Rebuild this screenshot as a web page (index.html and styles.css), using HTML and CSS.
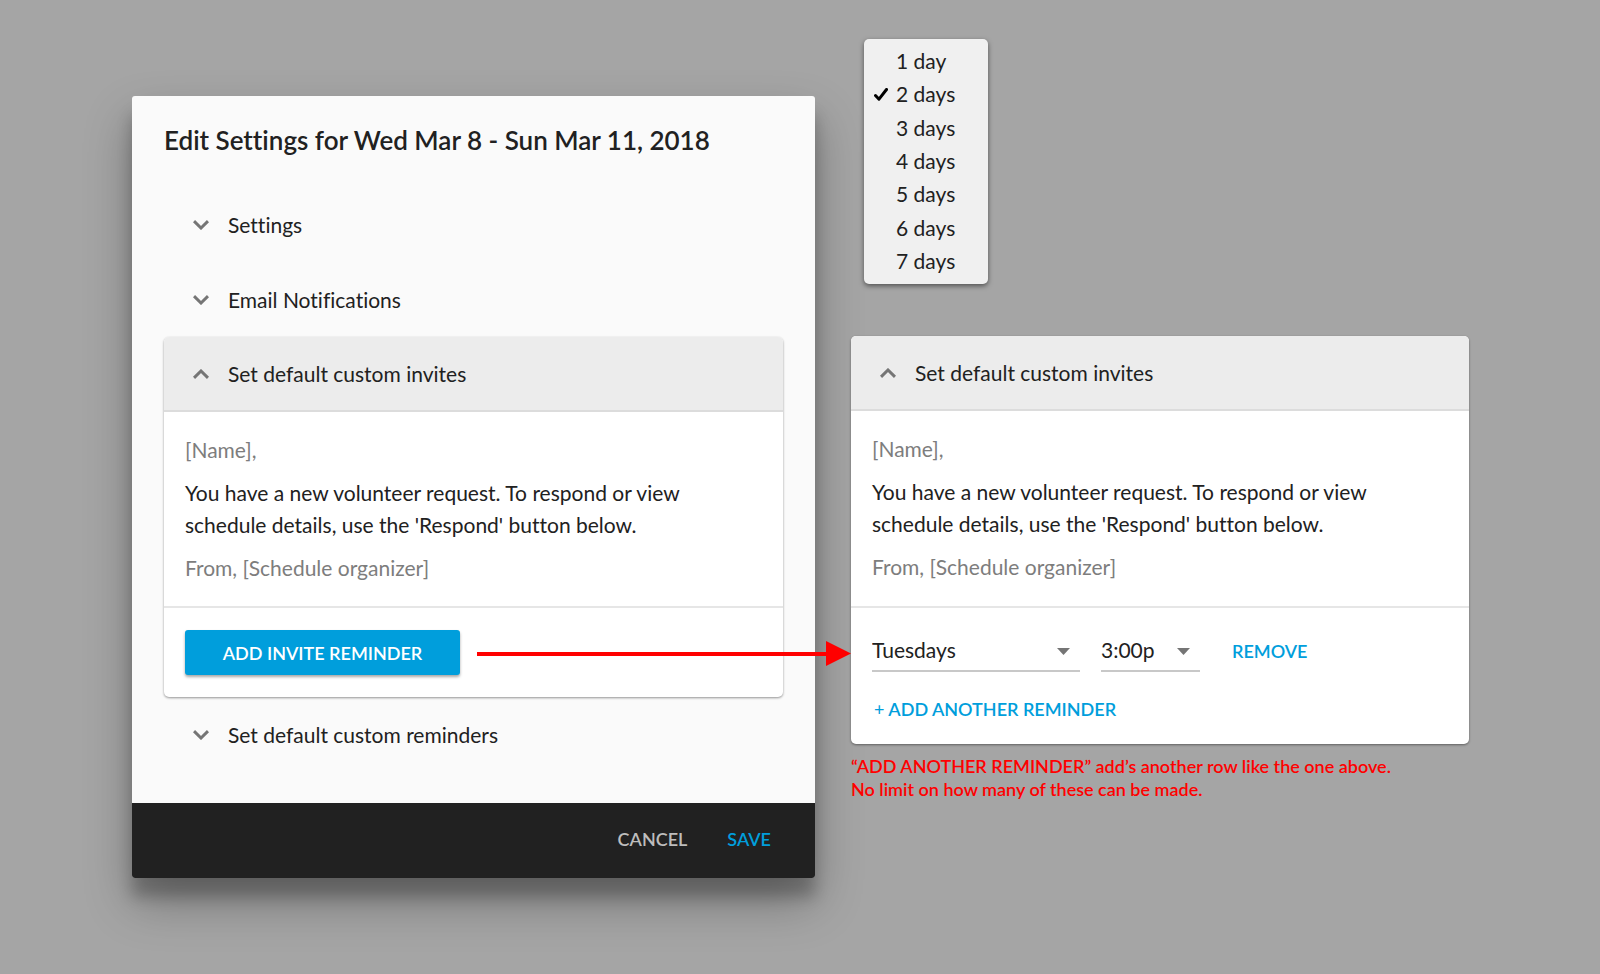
FILE: index.html
```html
<!DOCTYPE html>
<html lang="en">
<head>
<meta charset="utf-8">
<meta name="viewport" content="width=device-width, initial-scale=1">
<title>Edit Settings</title>
<link rel="stylesheet" href="styles.css">
</head>
<body>
<svg class="sprite" aria-hidden="true">
  <symbol id="chevron-down" viewBox="0 0 16 10"><path d="M1 1.200 8 8l7-6.800" fill="none" stroke="#757575" stroke-width="3"/></symbol>
  <symbol id="chevron-up" viewBox="0 0 16 10"><path d="M1 8.800 8 2l7 6.800" fill="none" stroke="#757575" stroke-width="3"/></symbol>
</svg>
<main class="board">
  <section class="modal" role="dialog" aria-labelledby="modal-title">
    <div class="modal-body">
      <h1 class="modal-title" id="modal-title">Edit Settings for Wed Mar 8 - Sun Mar 11, 2018</h1>
      <button class="section-toggle" type="button" aria-expanded="false"><svg class="chevron"><use href="#chevron-down"/></svg>Settings</button>
      <button class="section-toggle" type="button" aria-expanded="false"><svg class="chevron"><use href="#chevron-down"/></svg>Email Notifications</button>
      <article class="card">
        <button class="section-toggle card-header" type="button" aria-expanded="true"><svg class="chevron"><use href="#chevron-up"/></svg>Set default custom invites</button>
        <div class="message">
          <p class="muted">[Name],</p>
          <p>You have a new volunteer request. To respond or view<br>schedule details, use the 'Respond' button below.</p>
          <p class="muted">From, [Schedule organizer]</p>
        </div>
        <div class="card-action">
          <button class="primary" type="button">ADD INVITE REMINDER</button>
          <div class="arrow" aria-hidden="true"><span class="arrow-line"></span><svg class="arrow-head" viewBox="0 0 25 25"><path d="M0 0 25 12.500 0 25z" fill="#f00"/></svg></div>
        </div>
      </article>
      <button class="section-toggle" type="button" aria-expanded="false"><svg class="chevron"><use href="#chevron-down"/></svg>Set default custom reminders</button>
    </div>
    <footer class="modal-footer">
      <button class="text-button cancel" type="button">CANCEL</button>
      <button class="text-button" type="button">SAVE</button>
    </footer>
  </section>

  <div class="detail">
    <ul class="menu" role="listbox" aria-label="Days">
      <li class="option" role="option" aria-selected="false">1 day</li>
      <li class="option" role="option" aria-selected="true"><svg class="check" viewBox="0 0 14 13"><path d="M1.500 7.500 5 11.200 12.500 1.500" fill="none" stroke="#000" stroke-width="3" stroke-linecap="round" stroke-linejoin="round"/></svg>2 days</li>
      <li class="option" role="option" aria-selected="false">3 days</li>
      <li class="option" role="option" aria-selected="false">4 days</li>
      <li class="option" role="option" aria-selected="false">5 days</li>
      <li class="option" role="option" aria-selected="false">6 days</li>
      <li class="option" role="option" aria-selected="false">7 days</li>
    </ul>
    <article class="card">
      <button class="section-toggle card-header" type="button" aria-expanded="true"><svg class="chevron"><use href="#chevron-up"/></svg>Set default custom invites</button>
      <div class="message">
        <p class="muted">[Name],</p>
        <p>You have a new volunteer request. To respond or view<br>schedule details, use the 'Respond' button below.</p>
        <p class="muted">From, [Schedule organizer]</p>
      </div>
      <div class="reminders">
        <div class="reminder-row">
          <span class="field field-day"><select class="select" aria-label="Reminder day"><option>Tuesdays</option></select><svg class="caret" viewBox="0 0 13 7"><path d="M0 0h13L6.500 7z" fill="#757575"/></svg></span>
          <span class="field field-time"><select class="select" aria-label="Reminder time"><option>3:00p</option></select><svg class="caret" viewBox="0 0 13 7"><path d="M0 0h13L6.500 7z" fill="#757575"/></svg></span>
          <button class="text-button remove" type="button">REMOVE</button>
        </div>
        <button class="text-button add-another" type="button"><span class="plus">+</span> ADD ANOTHER REMINDER</button>
      </div>
    </article>
    <p class="note">“ADD ANOTHER REMINDER” add’s another row like the one above.<br>No limit on how many of these can be made.</p>
  </div>
</main>
</body>
</html>
```
FILE: styles.css
```css
* { box-sizing: border-box; }

body {
  margin: 0;
  background: #a5a5a5;
  color: #212121;
  font-family: Lato, "Open Sans", sans-serif;
  font-size: 21px;
  font-variant-ligatures: none;
  line-height: 32px;
}

button, select {
  margin: 0;
  padding: 0;
  border: 0;
  background: none;
  color: inherit;
  font: inherit;
  font-variant-ligatures: none;
  cursor: pointer;
}

p, h1, ul { margin: 0; padding: 0; }

.sprite { position: absolute; width: 0; height: 0; }

.board {
  display: grid;
  grid-template-columns: 683fr 618fr;
  gap: 36px;
  align-items: start;
  padding: 39px 131px 96px 132px;
}

.modal {
  margin-top: 57px;
  border-radius: 3px;
  background: #fafafa;
  box-shadow: 0 24px 48px rgba(0, 0, 0, 0.3), 0 19px 15px rgba(0, 0, 0, 0.22);
}

.modal-body { padding: 28px 32px 31px; }

.modal-title {
  margin-bottom: 31px;
  font-size: 26px;
  font-weight: 600;
  line-height: 32px;
}

.section-toggle {
  display: flex;
  align-items: center;
  gap: 19px;
  width: 100%;
  padding: 22px 29px 21px;
  text-align: left;
}

.chevron { flex: none; width: 16px; height: 10px; }

.card {
  border-radius: 5px;
  background: #fff;
  box-shadow: 0 1px 3px rgba(0, 0, 0, 0.2), 0 1px 2px rgba(0, 0, 0, 0.24);
}

.card-header {
  padding: 21px 29px 20px;
  border-bottom: 2px solid #dcdcdc;
  border-radius: 5px 5px 0 0;
  background: #ececec;
}

.message {
  display: grid;
  gap: 11px;
  padding: 22px 21px;
  border-bottom: 2px solid #e6e6e6;
}

.detail .message { padding-bottom: 23px; }

.muted { color: #7d7d7d; }

.card-action {
  position: relative;
  padding: 22px 21px;
}

.primary {
  display: block;
  width: 275px;
  height: 45px;
  border-radius: 3px;
  background: #009edc;
  box-shadow: 0 2px 3px rgba(0, 0, 0, 0.35);
  color: #fff;
  font-size: 18px;
  font-weight: 600;
}

.arrow {
  position: absolute;
  top: 33px;
  right: -68px;
  left: 313px;
  display: flex;
  align-items: center;
}

.arrow-line { flex: 1; height: 4px; background: #f00; }
.arrow-head { width: 25px; height: 25px; }

.modal-footer {
  display: flex;
  justify-content: flex-end;
  gap: 40px;
  padding: 20px 44px 23px;
  border-radius: 0 0 3px 3px;
  background: #212121;
}

.text-button {
  color: #009edc;
  font-size: 18px;
  font-weight: 600;
}

.cancel { color: #bdbdbd; }

.menu {
  display: grid;
  grid-auto-rows: 1fr;
  width: 124px;
  min-height: 245px;
  margin: 0 0 52px 13px;
  padding: 5px 0 6px;
  border-radius: 5px;
  background: #f0f0f0;
  box-shadow: 0 2px 5px rgba(0, 0, 0, 0.5);
  list-style: none;
}

.option {
  position: relative;
  display: flex;
  align-items: center;
  padding-left: 32px;
}

.check {
  position: absolute;
  left: 10px;
  width: 14px;
  height: 13px;
}

.reminders { padding: 22px 21px 19px; }

.reminder-row {
  display: flex;
  margin-bottom: 20px;
}

.field {
  position: relative;
  margin-right: 21px;
  border-bottom: 2px solid #c8c8c8;
}

.field-day { width: 208px; }
.field-time { width: 99px; }

.select {
  width: 100%;
  height: 40px;
  appearance: none;
}

.caret {
  position: absolute;
  top: 18px;
  right: 10px;
  width: 13px;
  height: 7px;
  pointer-events: none;
}

.remove { margin-left: 11px; }
.add-another { padding-left: 2px; }
.plus { font-weight: 400; }

.note {
  margin-top: 11px;
  color: #f00;
  font-size: 18px;
  font-weight: 600;
  line-height: 23px;
}
```
